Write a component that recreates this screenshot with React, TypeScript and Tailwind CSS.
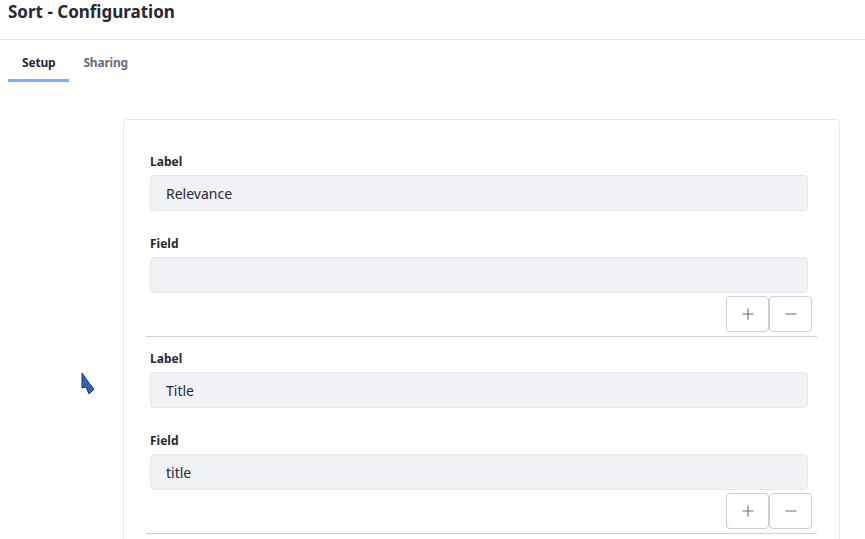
import { Plus, Minus } from "lucide-react";

const rows = [
  { label: "Relevance", field: "" },
  { label: "Title", field: "title" },
];

function TextInput({ value }: { value: string }) {
  return (
    <div className="h-9 rounded-[4px] border border-[#e7e7ed] bg-[#f1f2f5] px-[15px] flex items-center text-[14px] text-[#272833]">
      {value}
    </div>
  );
}

function SortRow({ label, field, first }: { label: string; field: string; first: boolean }) {
  return (
    <div className={`border-b border-[#cdced9] pb-[4px] ${first ? "pt-0" : "pt-[13px]"}`}>
      <div className="pl-[4px] pr-[9px]">
        <p className="text-[12px] leading-[18px] font-bold text-[#272833] mb-1">Label</p>
        <TextInput value={label} />
        <p className="text-[12px] leading-[18px] font-bold text-[#272833] mt-[24px] mb-1">Field</p>
        <TextInput value={field} />
      </div>
      <div className="flex justify-end pr-[5px] mt-[3px]">
        <button className="w-[43px] h-9 rounded-[4px] border border-[#cdced9] bg-white flex items-center justify-center text-[#6b6c7e]">
          <Plus className="w-[18px] h-[18px]" strokeWidth={1.5} />
        </button>
        <button className="w-[43px] h-9 rounded-[4px] border border-[#cdced9] bg-white flex items-center justify-center text-[#6b6c7e]">
          <Minus className="w-[18px] h-[18px]" strokeWidth={1.5} />
        </button>
      </div>
    </div>
  );
}

export default function App() {
  return (
    <div
      className="relative w-[865px] h-[539px] overflow-hidden bg-white text-[#272833]"
      style={{ fontFamily: '"Noto Sans", "Open Sans", sans-serif' }}
    >
      {/* Header */}
      <div className="h-[40px] border-b border-[#e7e7ed] pl-[8px] pt-[1px]">
        <h1 className="text-[17px] leading-[22px] font-bold">Sort - Configuration</h1>
      </div>

      {/* Tabs */}
      <div className="flex pl-[8px]">
        <div className="px-[14px] pt-[14px] pb-[7px] border-b-[3px] border-[#80acff] text-[12px] leading-[18px] font-bold tracking-[-0.2px] text-[#272833]">
          Setup
        </div>
        <div className="px-[14px] pt-[14px] pb-[7px] border-b-[3px] border-transparent text-[12px] leading-[18px] font-bold tracking-[-0.2px] text-[#6b6c7e]">
          Sharing
        </div>
      </div>

      {/* Card */}
      <div className="ml-[123px] mt-[37px] w-[717px] h-[500px] rounded-t-[4px] border border-[#e7e7ed] px-[22px] pt-[33px]">
        {rows.map((r, i) => (
          <SortRow key={i} label={r.label} field={r.field} first={i === 0} />
        ))}
      </div>

      {/* Cursor */}
      <svg className="absolute left-[80px] top-[372px]" width="16" height="24" viewBox="0 0 16 24">
        <path d="M2 1 L2 16 L6 15 L9 22 L14 17 L9 11 Z" fill="#2d62b8" stroke="#173a75" strokeWidth="1" strokeLinejoin="round" />
      </svg>
    </div>
  );
}
